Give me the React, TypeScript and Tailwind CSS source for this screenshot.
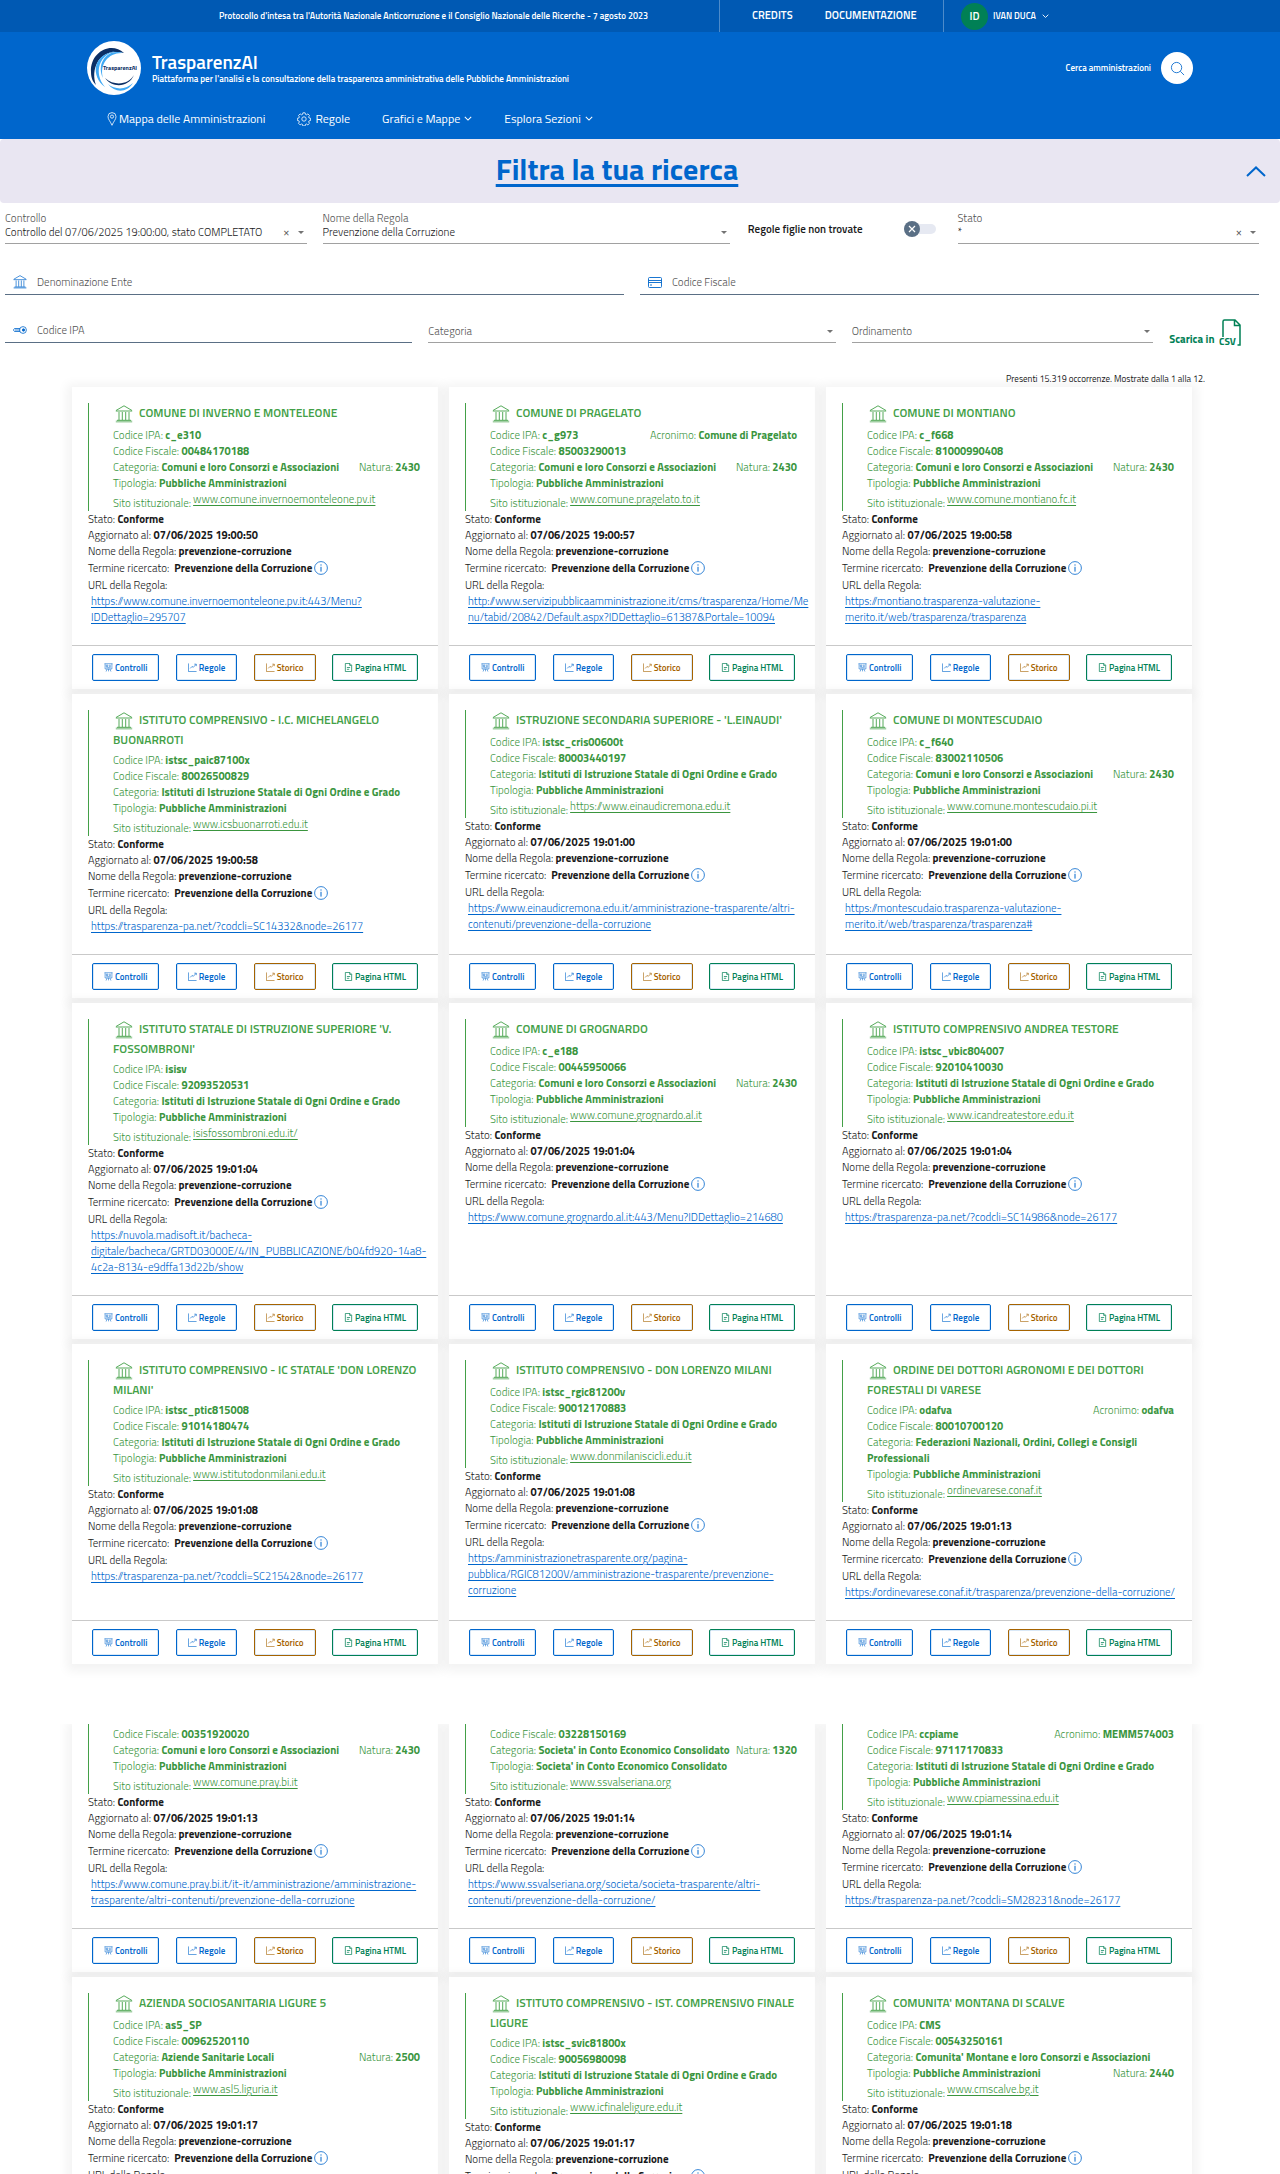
import React from "react";

type Entity = {
  name?: string;
  ipa?: string;
  fiscal: string;
  category: string;
  acronym?: string;
  nature?: string;
  natureBelow?: boolean;
  type?: string;
  site: string;
  time: string;
  url?: string;
};

const COMUNI = "Comuni e loro Consorzi e Associazioni";
const ISTITUTI = "Istituti di Istruzione Statale di Ogni Ordine e Grado";

const firstPage: Entity[] = [
  { name: "COMUNE DI INVERNO E MONTELEONE", ipa: "c_e310", fiscal: "00484170188", category: COMUNI, nature: "2430", site: "www.comune.invernoemonteleone.pv.it", time: "19:00:50", url: "https://www.comune.invernoemonteleone.pv.it:443/Menu?IDDettaglio=295707" },
  { name: "COMUNE DI PRAGELATO", ipa: "c_g973", acronym: "Comune di Pragelato", fiscal: "85003290013", category: COMUNI, nature: "2430", site: "www.comune.pragelato.to.it", time: "19:00:57", url: "http://www.servizipubblicaamministrazione.it/cms/trasparenza/Home/Menu/tabid/20842/Default.aspx?IDDettaglio=61387&Portale=10094" },
  { name: "COMUNE DI MONTIANO", ipa: "c_f668", fiscal: "81000990408", category: COMUNI, nature: "2430", site: "www.comune.montiano.fc.it", time: "19:00:58", url: "https://montiano.trasparenza-valutazione-merito.it/web/trasparenza/trasparenza" },
  { name: "ISTITUTO COMPRENSIVO - I.C. MICHELANGELO BUONARROTI", ipa: "istsc_paic87100x", fiscal: "80026500829", category: ISTITUTI, site: "www.icsbuonarroti.edu.it", time: "19:00:58", url: "https://trasparenza-pa.net/?codcli=SC14332&node=26177" },
  { name: "ISTRUZIONE SECONDARIA SUPERIORE - 'L.EINAUDI'", ipa: "istsc_cris00600t", fiscal: "80003440197", category: ISTITUTI, site: "https://www.einaudicremona.edu.it", time: "19:01:00", url: "https://www.einaudicremona.edu.it/amministrazione-trasparente/altri-contenuti/prevenzione-della-corruzione" },
  { name: "COMUNE DI MONTESCUDAIO", ipa: "c_f640", fiscal: "83002110506", category: COMUNI, nature: "2430", site: "www.comune.montescudaio.pi.it", time: "19:01:00", url: "https://montescudaio.trasparenza-valutazione-merito.it/web/trasparenza/trasparenza#" },
  { name: "ISTITUTO STATALE DI ISTRUZIONE SUPERIORE 'V. FOSSOMBRONI'", ipa: "isisv", fiscal: "92093520531", category: ISTITUTI, site: "isisfossombroni.edu.it/", time: "19:01:04", url: "https://nuvola.madisoft.it/bacheca-digitale/bacheca/GRTD03000E/4/IN_PUBBLICAZIONE/b04fd920-14a8-4c2a-8134-e9dffa13d22b/show" },
  { name: "COMUNE DI GROGNARDO", ipa: "c_e188", fiscal: "00445950066", category: COMUNI, nature: "2430", site: "www.comune.grognardo.al.it", time: "19:01:04", url: "https://www.comune.grognardo.al.it:443/Menu?IDDettaglio=214680" },
  { name: "ISTITUTO COMPRENSIVO ANDREA TESTORE", ipa: "istsc_vbic804007", fiscal: "92010410030", category: ISTITUTI, site: "www.icandreatestore.edu.it", time: "19:01:04", url: "https://trasparenza-pa.net/?codcli=SC14986&node=26177" },
  { name: "ISTITUTO COMPRENSIVO - IC STATALE 'DON LORENZO MILANI'", ipa: "istsc_ptic815008", fiscal: "91014180474", category: ISTITUTI, site: "www.istitutodonmilani.edu.it", time: "19:01:08", url: "https://trasparenza-pa.net/?codcli=SC21542&node=26177" },
  { name: "ISTITUTO COMPRENSIVO - DON LORENZO MILANI", ipa: "istsc_rgic81200v", fiscal: "90012170883", category: ISTITUTI, site: "www.donmilaniscicli.edu.it", time: "19:01:08", url: "https://amministrazionetrasparente.org/pagina-pubblica/RGIC81200V/amministrazione-trasparente/prevenzione-corruzione" },
  { name: "ORDINE DEI DOTTORI AGRONOMI E DEI DOTTORI FORESTALI DI VARESE", ipa: "odafva", acronym: "odafva", fiscal: "80010700120", category: "Federazioni Nazionali, Ordini, Collegi e Consigli Professionali", site: "ordinevarese.conaf.it", time: "19:01:13", url: "https://ordinevarese.conaf.it/trasparenza/prevenzione-della-corruzione/" },
];

const nextPage: Entity[] = [
  { fiscal: "00351920020", category: COMUNI, nature: "2430", site: "www.comune.pray.bi.it", time: "19:01:13", url: "https://www.comune.pray.bi.it/it-it/amministrazione/amministrazione-trasparente/altri-contenuti/prevenzione-della-corruzione" },
  { fiscal: "03228150169", category: "Societa' in Conto Economico Consolidato", nature: "1320", type: "Societa' in Conto Economico Consolidato", site: "www.ssvalseriana.org", time: "19:01:14", url: "https://www.ssvalseriana.org/societa/societa-trasparente/altri-contenuti/prevenzione-della-corruzione/" },
  { ipa: "ccpiame", acronym: "MEMM574003", fiscal: "97117170833", category: ISTITUTI, site: "www.cpiamessina.edu.it", time: "19:01:14", url: "https://trasparenza-pa.net/?codcli=SM28231&node=26177" },
  { name: "AZIENDA SOCIOSANITARIA LIGURE 5", ipa: "as5_SP", fiscal: "00962520110", category: "Aziende Sanitarie Locali", nature: "2500", site: "www.asl5.liguria.it", time: "19:01:17" },
  { name: "ISTITUTO COMPRENSIVO - IST. COMPRENSIVO FINALE LIGURE", ipa: "istsc_svic81800x", fiscal: "90056980098", category: ISTITUTI, site: "www.icfinaleligure.edu.it", time: "19:01:17" },
  { name: "COMUNITA' MONTANA DI SCALVE", ipa: "CMS", fiscal: "00543250161", category: "Comunita' Montane e loro Consorzi e Associazioni", nature: "2440", natureBelow: true, site: "www.cmscalve.bg.it", time: "19:01:18" },
];

function Bank({ className }: { className: string }) {
  return (
    <svg viewBox="0 0 18 18" className={className} fill="none" stroke="currentColor" aria-hidden="true">
      <path d="M1 5.500 9 .8l8 4.700M.8 6h16.400M4 7v8M7.300 7v8M10.700 7v8M14 7v8M2 15.300h14" strokeWidth="0.9" />
      <path d="M.8 15.500h16.400v2H.8z" fill="currentColor" fillOpacity="0.5" stroke="none" />
    </svg>
  );
}

function Chevron({ className }: { className: string }) {
  return (
    <svg viewBox="0 0 10 6" className={className} fill="none" stroke="currentColor" strokeWidth="1.300" aria-hidden="true">
      <path d="m1 1 4 4 4-4" />
    </svg>
  );
}

function Caret() {
  return (
    <svg viewBox="0 0 6 3" className="h-[3px] w-[6px] shrink-0 text-neutral-500" aria-hidden="true">
      <path d="M0 0h6L3 3z" fill="currentColor" />
    </svg>
  );
}

function ChartIcon() {
  return (
    <svg viewBox="0 0 10 10" className="size-[9px]" fill="none" stroke="currentColor" strokeWidth="0.7" aria-hidden="true">
      <path d="M.5.5v9h9M2.500 6l2-2.200 1.400 1L9 1.500M7 1.300h2.200v2.200" />
    </svg>
  );
}

function BoardIcon() {
  return (
    <svg viewBox="0 0 10 10" className="size-[9px]" fill="none" stroke="currentColor" strokeWidth="0.6" aria-hidden="true">
      <path d="M.5.8h9M1.200.8v5.800h7.600V.8M2.500 2.300h1.800v1.600H2.500zM5.600 2.500h2M5.600 3.800h2M2.500 5.200h5M3.500 6.600 2.300 9.500M6.500 6.600l1.200 2.900M5 6.600v2.700" />
    </svg>
  );
}

function FileIcon() {
  return (
    <svg viewBox="0 0 10 10" className="size-[9px]" fill="none" stroke="currentColor" strokeWidth="0.8" aria-hidden="true">
      <path d="M1.500.5h5l2 2v7h-7zM6.300.6v2.100h2M3.200 5h3.600M3.200 7h2.600" />
    </svg>
  );
}

function InfoIcon() {
  return (
    <svg viewBox="0 0 14 14" className="size-[14px]" fill="none" stroke="currentColor" strokeWidth="0.8" aria-hidden="true">
      <circle cx="7" cy="7" r="6.400" />
      <path d="M7 5.800v4.800M7 3.400v1.200" strokeWidth="1" />
    </svg>
  );
}

function Pair({ label, value }: { label: string; value: string }) {
  return (
    <span>
      {label}: <b className="font-bold">{value}</b>
    </span>
  );
}

const outline = "flex h-[27px] items-center gap-[2px] rounded-[2px] border px-[11px] text-[9px] font-semibold shadow-[inset_0_0_0_1px_rgba(0,102,204,0.15)]";

function Card({ entity: e }: { entity: Entity }) {
  return (
    <article className="flex flex-col bg-white shadow-[0_2px_10px_5px_rgba(0,0,0,0.05)]">
      <div className={`grow px-4 pb-5 text-[11px] leading-4 font-light text-[#19191a] ${e.name ? "pt-4" : "pt-0"}`}>
        <div className={`border-l border-[#43a047] pr-[2px] pl-6 text-[#3a953e] ${e.name ? "pt-0" : "pt-[2px]"}`}>
          {e.name && (
            <h2 className="min-h-6 pb-[2px] text-[12px] leading-5 font-semibold text-[#43a047]">
              <Bank className="-my-1 mr-[6px] ml-[2px] inline-block size-[18px] align-middle" />
              {e.name}
            </h2>
          )}
          {e.ipa && (
            <p className="flex justify-between">
              <Pair label="Codice IPA" value={e.ipa} />
              {e.acronym && <Pair label="Acronimo" value={e.acronym} />}
            </p>
          )}
          <p>
            <Pair label="Codice Fiscale" value={e.fiscal} />
          </p>
          <p className="flex justify-between">
            <Pair label="Categoria" value={e.category} />
            {e.nature && !e.natureBelow && <Pair label="Natura" value={e.nature} />}
          </p>
          <p className="flex justify-between">
            <Pair label="Tipologia" value={e.type ?? "Pubbliche Amministrazioni"} />
            {e.nature && e.natureBelow && <Pair label="Natura" value={e.nature} />}
          </p>
          <p className="flex gap-[2px]">
            <span className="pt-1">Sito istituzionale:</span>
            <a href="#" className="underline underline-offset-2">{e.site}</a>
          </p>
        </div>
        <p><Pair label="Stato" value="Conforme" /></p>
        <p><Pair label="Aggiornato al" value={`07/06/2025 ${e.time}`} /></p>
        <p><Pair label="Nome della Regola" value="prevenzione-corruzione" /></p>
        <p className="flex h-[18px] items-center">
          <span>Termine ricercato:</span>
          <b className="mr-[2px] ml-[5px] font-bold">Prevenzione della Corruzione</b>
          <button type="button" aria-label="Informazioni" className="text-[#0066cc]">
            <InfoIcon />
          </button>
        </p>
        <p>URL della Regola:</p>
        {e.url && (
          <p className="-mr-3 pl-[3px]">
            <a href="#" className="text-[#0066cc] underline underline-offset-2 [overflow-wrap:anywhere]">{e.url}</a>
          </p>
        )}
      </div>
      <div className="flex justify-between border-t border-[#c9c9c9] px-5 py-2">
        <button type="button" className={`${outline} border-[#0066cc] text-[#0066cc]`}><BoardIcon />Controlli</button>
        <button type="button" className={`${outline} border-[#0066cc] text-[#0066cc]`}><ChartIcon />Regole</button>
        <button type="button" className={`${outline} border-[#a66300] text-[#a66300]`}><ChartIcon />Storico</button>
        <button type="button" className={`${outline} border-[#008055] text-[#008055]`}><FileIcon />Pagina HTML</button>
      </div>
    </article>
  );
}

function SelectField({ id, label, value, clearable, className }: { id: string; label: string; value?: string; clearable?: boolean; className: string }) {
  return (
    <div className={`border-b border-neutral-400 pb-1 text-[11px] leading-[14px] font-light ${className}`}>
      {value && <label htmlFor={id} className="block text-neutral-600">{label}</label>}
      <div className="flex items-center gap-2 pr-[3px]">
        <select id={id} aria-label={label} className={`min-w-0 grow appearance-none bg-transparent outline-none ${value ? "text-[#19191a]" : "text-neutral-600"}`}>
          <option>{value ?? label}</option>
        </select>
        {clearable && <button type="button" aria-label={`Cancella ${label}`} className="font-normal text-neutral-600">×</button>}
        <Caret />
      </div>
    </div>
  );
}

function TextField({ label, icon, className }: { label: string; icon: React.ReactNode; className: string }) {
  return (
    <div className={`flex items-center border-b border-[#5a6f85] pb-1 pl-2 text-[11px] leading-4 text-[#0066cc] ${className}`}>
      {icon}
      <input type="text" aria-label={label} placeholder={label} className="ml-[10px] h-4 min-w-0 grow font-light text-[#19191a] outline-none placeholder:text-neutral-600" />
    </div>
  );
}

function Logo() {
  return (
    <svg viewBox="0 0 54 54" className="size-[54px] shrink-0" role="img" aria-label="TrasparenzAI">
      <circle cx="27" cy="27" r="27" fill="#fff" />
      <path d="M37 12C24 0 3 11 4 31c0 6 2 10 5 13C3 27 13 6 37 12z" fill="#0b2f66" />
      <path d="M31 10C12 12 6 32 18 46c-14-10-14-34 13-36z" fill="#3fa9f5" />
      <path d="M36 12c-14-1-24 11-20 25-7-14 4-30 20-25z" fill="#3fa9f5" />
      <path d="M18 37c8 11 24 9 29-3-5 9-19 12-29 3z" fill="#0b2f66" />
      <path d="M21 43c7 6 18 6 25-1-6 10-18 10-25 1z" fill="#3fa9f5" />
      <text x="16" y="29" fontSize="6" fontWeight="700" fill="#0b2f66">TrasparenzAI</text>
    </svg>
  );
}

export default function App() {
  return (
    <div className="h-screen overflow-hidden bg-white font-['Titillium_Web',Roboto,sans-serif] text-[#19191a]">
      <header className="bg-[#0066cc] text-white">
        <div className="flex h-8 items-stretch bg-[#0059b3] pl-[219px]">
          <p className="flex w-[501px] items-center border-r border-white/30 text-[9px] font-semibold">
            Protocollo d'intesa tra l'Autorità Nazionale Anticorruzione e il Consiglio Nazionale delle Ricerche - 7 agosto 2023
          </p>
          <nav className="flex w-[224px] items-center gap-8 border-r border-white/30 pb-[2px] pl-8 text-[11px] font-semibold">
            <a href="#">CREDITS</a>
            <a href="#">DOCUMENTAZIONE</a>
          </nav>
          <button type="button" className="flex items-center pl-[17px] text-[9px] font-semibold">
            <span className="mr-[5px] flex size-[27px] items-center justify-center rounded-full bg-[#008055] text-[11px]">ID</span>
            <span>IVAN DUCA</span>
            <Chevron className="ml-[6px] w-[7px]" />
          </button>
        </div>
        <div className="flex items-center pt-[9px] pr-[87px] pl-[87px]">
          <Logo />
          <div className="ml-[11px] grow pt-[2px]">
            <h1 className="text-[19px] leading-5 font-semibold">TrasparenzAI</h1>
            <p className="text-[9px] leading-[14px] font-semibold">Piattaforma per l'analisi e la consultazione della trasparenza amministrativa delle Pubbliche Amministrazioni</p>
          </div>
          <span className="mr-[10px] text-[9px] font-semibold">Cerca amministrazioni</span>
          <button type="button" aria-label="Cerca" className="flex size-8 items-center justify-center rounded-full bg-white text-[#0066cc]">
            <svg viewBox="0 0 16 16" className="size-[15px]" fill="none" stroke="currentColor" strokeWidth="0.9" aria-hidden="true">
              <circle cx="7" cy="7" r="5.500" />
              <path d="m11 11 4 4" />
            </svg>
          </button>
        </div>
        <nav className="flex h-[44px] items-center gap-8 pt-[3px] pl-[107px] text-[12px] font-normal">
          <a href="#" className="flex items-center gap-[2px]">
            <svg viewBox="0 0 10 14" className="h-[14px] w-[10px]" fill="none" stroke="currentColor" strokeWidth="0.8" aria-hidden="true">
              <path d="M5 13.300C3.500 9.500 1 7.500 1 4.600a4 4 0 0 1 8 0C9 7.500 6.500 9.500 5 13.300z" />
              <circle cx="5" cy="4.600" r="1.600" />
            </svg>
            Mappa delle Amministrazioni
          </a>
          <a href="#" className="flex items-center gap-1">
            <svg viewBox="0 0 14 14" className="size-[14px]" fill="none" stroke="currentColor" strokeWidth="0.8" aria-hidden="true">
              <circle cx="7" cy="7" r="2.200" />
              <path d="M5.900.8h2.200l.4 1.600 1 .4 1.400-.9 1.600 1.600-.9 1.400.4 1 1.600.4v2.200l-1.600.4-.4 1 .9 1.400-1.600 1.600-1.400-.9-1 .4-.4 1.600H5.900l-.4-1.600-1-.4-1.400.9-1.600-1.600.9-1.400-.4-1-1.600-.4V6.300L2 5.900l.4-1-.9-1.400 1.600-1.600 1.400.9 1-.4z" />
            </svg>
            Regole
          </a>
          <a href="#" className="flex items-center gap-1">Grafici e Mappe<Chevron className="w-[8px]" /></a>
          <a href="#" className="flex items-center gap-1">Esplora Sezioni<Chevron className="w-[8px]" /></a>
        </nav>
      </header>

      <button type="button" className="flex h-16 w-full items-center gap-3 rounded-[4px] bg-[#e9e6f2] pr-[14px] pb-1 pl-[5px] text-[30px] font-bold text-[#0066cc]">
        <span className="grow pr-[5px] text-center underline decoration-[3px] underline-offset-4">Filtra la tua ricerca</span>
        <svg viewBox="0 0 20 11" className="mt-1 h-[11px] w-5 shrink-0" fill="none" stroke="currentColor" strokeWidth="2" aria-hidden="true">
          <path d="m1 10 9-8.500L19 10" />
        </svg>
      </button>

      <form className="grid grid-cols-12 grid-rows-[41px_51px_48px] items-end gap-x-4 pr-[21px] pl-[5px]">
        <SelectField id="controllo" label="Controllo" value="Controllo del 07/06/2025 19:00:00, stato COMPLETATO" clearable className="col-span-3" />
        <SelectField id="regola" label="Nome della Regola" value="Prevenzione della Corruzione" className="col-span-4" />
        <label className="col-span-2 mb-[7px] flex h-4 items-center justify-between pr-[6px] pl-[2px] text-[11px] font-semibold">
          Regole figlie non trovate
          <input type="checkbox" className="sr-only" />
          <span className="flex h-[10px] w-8 items-center rounded-full bg-[#e6e9f2]">
            <span className="flex size-4 items-center justify-center rounded-full bg-[#5a6f85] text-white">
              <svg viewBox="0 0 8 8" className="size-[8px]" stroke="currentColor" strokeWidth="1.200" aria-hidden="true">
                <path d="m1 1 6 6M7 1 1 7" />
              </svg>
            </span>
          </span>
        </label>
        <SelectField id="stato" label="Stato" value="*" clearable className="col-span-3" />

        <TextField label="Denominazione Ente" icon={<Bank className="size-[14px]" />} className="col-span-6" />
        <TextField
          label="Codice Fiscale"
          icon={
            <svg viewBox="0 0 14 11" className="h-[11px] w-[14px]" fill="none" stroke="currentColor" strokeWidth="0.9" aria-hidden="true">
              <rect x="0.500" y="0.500" width="13" height="10" rx="1" />
              <path d="M.5 3.500h13M.5 5.500h13M2 8h2" />
            </svg>
          }
          className="col-span-6"
        />

        <TextField
          label="Codice IPA"
          icon={
            <svg viewBox="0 0 14 8" className="h-2 w-[14px]" fill="none" stroke="currentColor" strokeWidth="0.8" aria-hidden="true">
              <circle cx="10" cy="4" r="3.400" />
              <circle cx="10.500" cy="4" r="1.200" fill="currentColor" />
              <path d="M7 2.500H1.500L.4 4l1.100 1.500H7M2 4h5" />
            </svg>
          }
          className="col-span-4"
        />
        <SelectField id="categoria" label="Categoria" className="col-span-4" />
        <SelectField id="ordinamento" label="Ordinamento" className="col-span-3" />
        <button type="button" className="-mb-[3px] flex items-end gap-[5px] text-[11px] leading-[14px] font-bold whitespace-nowrap text-[#008055]">
          Scarica in
          <svg viewBox="0 0 22 27" className="h-[27px] w-[22px] shrink-0" fill="none" stroke="currentColor" strokeWidth="1.500" aria-hidden="true">
            <path d="M4 18V2.500A1.500 1.500 0 0 1 5.500 1H16l5 5v20h-2.500M15.500 1.200v5.300H21" />
            <text x="0" y="26" fontSize="10" fontWeight="700" fill="currentColor" stroke="none">CSV</text>
          </svg>
        </button>
      </form>

      <main>
        <p className="pt-[28px] pr-[75px] text-right text-[9px] leading-4 font-normal">Presenti 15.319 occorrenze. Mostrate dalla 1 alla 12.</p>
        <section className="grid grid-cols-3 gap-x-[11px] gap-y-[5px] pr-[88px] pl-[72px]">
          {firstPage.map((e) => <Card key={e.fiscal} entity={e} />)}
        </section>
        <section className="mt-[60px] grid grid-cols-3 gap-x-[11px] gap-y-[5px] overflow-hidden pr-[88px] pl-[72px]">
          {nextPage.map((e) => <Card key={e.fiscal} entity={e} />)}
        </section>
      </main>
    </div>
  );
}
